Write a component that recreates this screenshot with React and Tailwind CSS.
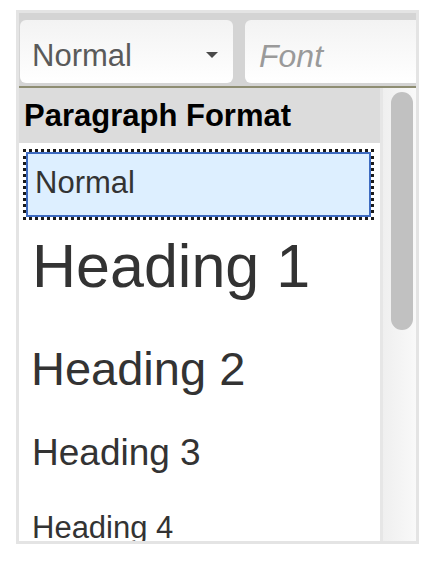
import React from 'react';

const headings = [
  { label: 'Heading 1', cls: 'h-[92px] leading-[92px] text-[61px] pl-[13px]' },
  { label: 'Heading 2', cls: 'h-[113px] leading-[113px] text-[47px] pl-[12px]' },
  { label: 'Heading 3', cls: 'h-[56px] leading-[56px] text-[37px] pl-[13px]' },
  { label: 'Heading 4', cls: 'h-[93px] leading-[93px] text-[31px] pl-[13px]' },
];

const App = () => {
  return (
    <div className="w-[436px] h-[566px] bg-white pt-[10px] pl-[16px] font-['Liberation_Sans',Arial,sans-serif]">
      <div className="w-[403px] h-[534px] border-[3px] border-[#e4e4e4] flex flex-col overflow-hidden">
        {/* toolbar */}
        <div className="h-[73px] bg-[#d4d4d4] pt-[7px] pb-[3px] pl-[1px] flex gap-[12px] overflow-hidden shrink-0">
          <div className="w-[213px] h-[63px] rounded-[6px] bg-gradient-to-b from-[#f3f3f3] to-[#ffffff] flex items-start pl-[12px] pr-[15px] pt-[9px]">
            <span className="flex-1 text-[31px] leading-[54px] text-[#5a5a5a]">Normal</span>
            <span className="mt-[23px] w-0 h-0 border-l-[6px] border-r-[6px] border-t-[6px] border-l-transparent border-r-transparent border-t-[#4a4a4a]"></span>
          </div>
          <div className="flex-1 h-[63px] rounded-l-[6px] bg-gradient-to-b from-[#f3f3f3] to-[#ffffff] pl-[14px] pt-[9px]">
            <span className="text-[32px] leading-[54px] italic text-[#9a9a9a]">Font</span>
          </div>
        </div>
        <div className="h-[2px] bg-[#8e8d72] shrink-0"></div>

        {/* body */}
        <div className="flex-1 flex overflow-hidden">
          <div className="w-[361px] bg-white overflow-hidden">
            <div className="h-[55px] bg-[#dcdcdc] pl-[5px] flex items-center">
              <span className="text-[31px] font-bold text-black leading-none">Paragraph Format</span>
            </div>
            <div className="mt-[6px] ml-[4px] w-[351px] h-[71px] border-[3px] border-dotted border-[#1a1a1a]">
              <div className="h-full border-2 border-[#3d6bc1] bg-[#ddefff] pl-[7px] text-[31px] leading-[57px] text-[#333]">
                Normal
              </div>
            </div>
            {headings.map((h) => (
              <div key={h.label} className={`${h.cls} text-[#333] whitespace-nowrap`}>
                {h.label}
              </div>
            ))}
          </div>
          <div className="flex-1 border-l-[3px] border-[#e6e6e6] bg-gradient-to-r from-[#efefef] to-[#f9f9f9] pt-[4px] pl-[8px]">
            <div className="w-[22px] h-[238px] rounded-full bg-[#c1c1c1]"></div>
          </div>
        </div>
      </div>
    </div>
  );
};

export default App;
